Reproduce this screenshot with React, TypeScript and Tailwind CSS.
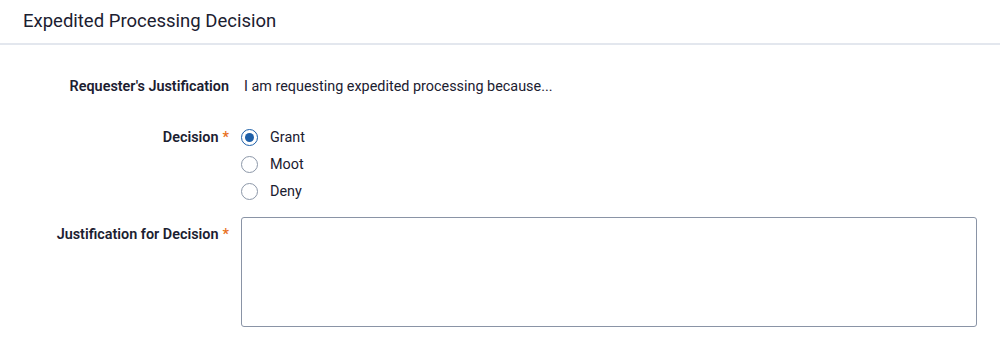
import { useState } from 'react';

const options = ['Grant', 'Moot', 'Deny'];

const Required = () => <span className="ml-1 text-[#e86f1c]">*</span>;

export default function App() {
  const [decision, setDecision] = useState('Grant');
  const [text, setText] = useState('');

  return (
    <div className="w-[1000px] h-[358px] bg-white text-[#1b2030] font-['Roboto',sans-serif]">
      <div className="h-[45px] border-b-2 border-[#e3e7ee] px-[23px] pt-[9px]">
        <h1 className="text-[18.5px] leading-[24px] font-normal">Expedited Processing Decision</h1>
      </div>

      <div className="pt-[32px] pr-[23px] text-[14.4px]">
        <div className="flex items-start">
          <div className="w-[229px] shrink-0 text-right font-semibold leading-[20px]">
            Requester's Justification
          </div>
          <div className="ml-[12px] pl-[3px] leading-[20px]">
            I am requesting expedited processing because...
          </div>
        </div>

        <div className="flex items-start mt-[27px]">
          <div className="w-[229px] shrink-0 text-right font-semibold leading-[27px]">
            Decision
            <Required />
          </div>
          <div className="ml-[12px] flex flex-col">
            {options.map((opt) => {
              const checked = decision === opt;
              return (
                <label key={opt} className="flex items-center h-[27px] cursor-pointer">
                  <input
                    type="radio"
                    name="decision"
                    className="sr-only"
                    checked={checked}
                    onChange={() => setDecision(opt)}
                  />
                  <span
                    className={`w-[17px] h-[17px] rounded-full border flex items-center justify-center ${
                      checked ? 'border-[#1d5fa8] border-[1.5px]' : 'border-[#8c97a8]'
                    }`}
                  >
                    {checked && <span className="w-[9px] h-[9px] rounded-full bg-[#1d5fa8]" />}
                  </span>
                  <span className="ml-[12px] leading-[20px]">{opt}</span>
                </label>
              );
            })}
          </div>
        </div>

        <div className="flex items-start mt-[12px]">
          <div className="w-[229px] shrink-0 text-right font-semibold leading-[20px] pt-[8px]">
            Justification for Decision
            <Required />
          </div>
          <textarea
            value={text}
            onChange={(e) => setText(e.target.value)}
            className="ml-[12px] w-[736px] h-[110px] rounded-[3px] border border-[#8a94a6] resize-none outline-none px-2 py-1"
          />
        </div>
      </div>
    </div>
  );
}
